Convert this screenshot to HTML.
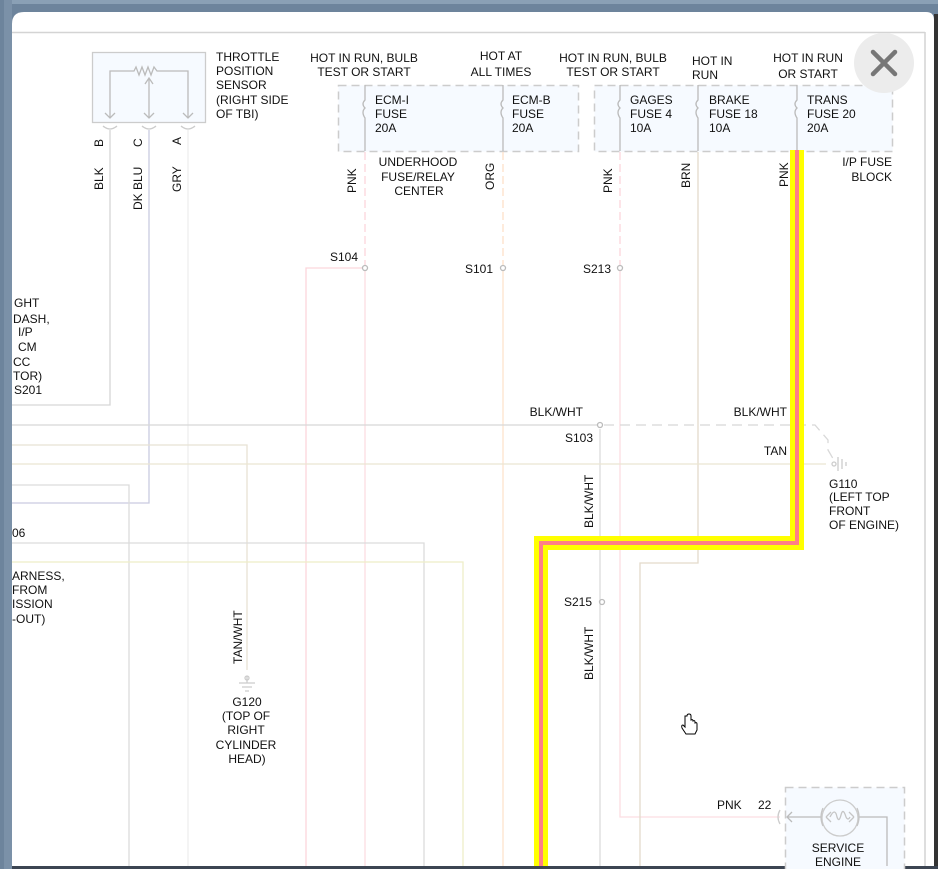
<!DOCTYPE html>
<html><head><meta charset="utf-8"><style>
html,body{margin:0;padding:0;width:938px;height:869px;overflow:hidden;background:#6d849c}
svg{display:block}
text{font-family:"Liberation Sans",Arial,sans-serif;font-size:12px;fill:#111}
</style></head><body>
<svg width="938" height="869" viewBox="0 0 938 869">
<rect x="0" y="0" width="938" height="869" fill="#6d849c"/>
<rect x="0" y="0" width="938" height="4" fill="#8aa0b5"/>
<path d="M12 869 V24 Q12 12 24 12 H926 Q934 12 934 20 V869 Z" fill="#fff"/>
<rect x="934" y="14" width="4" height="855" fill="#333"/>
<rect x="0" y="866" width="938" height="3" fill="#3c4552"/>
<line x1="12" y1="32.5" x2="925" y2="32.5" stroke="#d4d4d4" stroke-width="1.5"/>
<line x1="925" y1="32" x2="925" y2="866" stroke="#d4d4d4" stroke-width="1.5"/>
<g fill="none" stroke-width="1.3">
<!-- TPS -->
<rect x="92.5" y="52.5" width="113" height="70" fill="#f6faff" stroke="#ccc"/>
<path d="M110 118 V71 H134 l2-4 3 8 3-8 3 8 3-8 3 8 3-8 3 4 H188 V118" stroke="#bbb"/>
<path d="M149 79 V118 M145 84 l4-6 4 6" stroke="#bbb"/>
<path d="M105 113 l5 5 5-5 M144 113 l5 5 5-5 M183 113 l5 5 5-5" stroke="#bbb"/>
<path d="M103 126 q7 6 14 0 M142 126 q7 6 14 0 M181 126 q7 6 14 0" stroke="#ccc"/>
<path d="M12 405 H110 V130" stroke="#d6d6d6"/>
<path d="M12 503 H149 V130" stroke="#c9cbe0"/>
<path d="M188 130 V866" stroke="#eee"/>
<!-- fuse boxes -->
<rect x="338.5" y="85.5" width="240" height="66" fill="#f6faff" stroke="#ccc" stroke-dasharray="8,5" stroke-width="1.5"/>
<rect x="594.5" y="85.5" width="298" height="66" fill="#f6faff" stroke="#ccc" stroke-dasharray="8,5" stroke-width="1.5"/>
<g stroke="#bbb">
<path d="M365 85 V100 q-4 4 0 8 q-4 4 0 10 V151"/>
<path d="M503 85 V100 q-4 4 0 8 q-4 4 0 10 V151"/>
<path d="M620 85 V100 q-4 4 0 8 q-4 4 0 10 V151"/>
<path d="M698 85 V100 q-4 4 0 8 q-4 4 0 10 V151"/>
<path d="M797 85 V100 q-4 4 0 8 q-4 4 0 10 V151"/>
</g>
<!-- wires -->
<path d="M365 152 V266" stroke="#fcd6dc" stroke-dasharray="8,4"/>
<path d="M365 271 V866" stroke="#fcdde2"/>
<path d="M362 268 H306 V866" stroke="#fcd6dc"/>
<path d="M503 152 V266" stroke="#fde0c8" stroke-dasharray="8,4"/>
<path d="M503 271 V866" stroke="#fde3cc"/>
<path d="M620 152 V266" stroke="#fcd6dc" stroke-dasharray="8,4"/>
<path d="M620 271 V817 H780" stroke="#fcdde2"/>
<path d="M698 152 V563 H640 V866" stroke="#e3dacb"/>
<path d="M12 425 H597" stroke="#d8d8d8"/>
<path d="M604 425 H815 L828 440 V450 L835 462" stroke="#d8d8d8" stroke-dasharray="10,6"/>
<path d="M600 429 V866" stroke="#dcdcdc"/>
<path d="M12 445 H247 V670" stroke="#e8e2d4"/>
<path d="M12 464 H826" stroke="#ebe5d2"/>
<path d="M12 485 H129 V866" stroke="#dcdcdc"/>
<path d="M12 543 H424 V866" stroke="#dcdcdc"/>
<path d="M12 562 H463 V866" stroke="#eeeec8"/>
<circle cx="365" cy="268" r="2.5" stroke="#bbb"/>
<circle cx="503" cy="268" r="2.5" stroke="#bbb"/>
<circle cx="620" cy="268" r="2.5" stroke="#bbb"/>
<circle cx="600" cy="425" r="2.5" stroke="#bbb"/>
<circle cx="602" cy="602" r="2.5" stroke="#bbb"/>
<!-- grounds -->
<path d="M239 683 H255 M242 687 H252 M245 691 H249 M247 676 V683" stroke="#ccc"/>
<circle cx="247" cy="678" r="2" stroke="#ccc"/>
<path d="M838 457 V471 M842 459 V469 M846 462 V466" stroke="#ccc"/>
<circle cx="834" cy="464" r="2" stroke="#ccc"/>
<!-- service engine -->
<rect x="785.5" y="787.5" width="119" height="85" fill="#f6faff" stroke="#ccc" stroke-dasharray="8,5" stroke-width="1.5"/>
<path d="M780 810 q-4 7 0 14" stroke="#ccc"/>
<path d="M787 817 H822 M858 817 H887 V866 M792 812 l-5 5 5 5" stroke="#bbb"/>
<circle cx="840" cy="818" r="18" stroke="#ccc"/>
<path d="M823 808 q-4 9 0 18 M857 808 q4 9 0 18 M826 817 l5-5 M826 817 l5 5 M854 817 l-5-5 M854 817 l-5 5 M830 817 q5-10 7 0 q2 6 4-2 q2-8 5 2 q2 4 4 0" stroke="#c5c5c5"/>
<!-- highlight -->
<path d="M797 150 V543 H541 V866" stroke="#ffff00" stroke-width="14" stroke-linejoin="miter"/>
<path d="M797 150 V543 H541 V866" stroke="#ff7f87" stroke-width="4"/>
</g>
<!-- close button -->
<circle cx="884" cy="63" r="30" fill="#ececec"/>
<path d="M873 52 L895 74 M895 52 L873 74" stroke="#777" stroke-width="4.5" stroke-linecap="round"/>
<!-- texts -->
<text x="216" y="61">THROTTLE</text>
<text x="216" y="75">POSITION</text>
<text x="216" y="89">SENSOR</text>
<text x="216" y="104">(RIGHT SIDE</text>
<text x="216" y="118">OF TBI)</text>
<text x="364" y="62" text-anchor="middle">HOT IN RUN, BULB</text>
<text x="364" y="76" text-anchor="middle">TEST OR START</text>
<text x="501" y="60" text-anchor="middle">HOT AT</text>
<text x="501" y="76" text-anchor="middle">ALL TIMES</text>
<text x="613" y="62" text-anchor="middle">HOT IN RUN, BULB</text>
<text x="613" y="76" text-anchor="middle">TEST OR START</text>
<text x="692" y="65">HOT IN</text>
<text x="692" y="79">RUN</text>
<text x="808" y="62" text-anchor="middle">HOT IN RUN</text>
<text x="808" y="78" text-anchor="middle">OR START</text>
<text x="375" y="104">ECM-I</text><text x="375" y="118">FUSE</text><text x="375" y="132">20A</text>
<text x="512" y="104">ECM-B</text><text x="512" y="118">FUSE</text><text x="512" y="132">20A</text>
<text x="630" y="104">GAGES</text><text x="630" y="118">FUSE 4</text><text x="630" y="132">10A</text>
<text x="709" y="104">BRAKE</text><text x="709" y="118">FUSE 18</text><text x="709" y="132">10A</text>
<text x="807" y="104">TRANS</text><text x="807" y="118">FUSE 20</text><text x="807" y="132">20A</text>
<text x="418" y="166" text-anchor="middle">UNDERHOOD</text>
<text x="418" y="181" text-anchor="middle">FUSE/RELAY</text>
<text x="419" y="195" text-anchor="middle">CENTER</text>
<text x="892" y="166" text-anchor="end">I/P FUSE</text>
<text x="892" y="181" text-anchor="end">BLOCK</text>
<g>
<text transform="translate(103,147) rotate(-90)">B</text>
<text transform="translate(142,147) rotate(-90)">C</text>
<text transform="translate(181,145) rotate(-90)">A</text>
<text transform="translate(103,190) rotate(-90)">BLK</text>
<text transform="translate(142,210) rotate(-90)">DK BLU</text>
<text transform="translate(181,192) rotate(-90)">GRY</text>
<text transform="translate(356,193) rotate(-90)">PNK</text>
<text transform="translate(494,190) rotate(-90)">ORG</text>
<text transform="translate(612,193) rotate(-90)">PNK</text>
<text transform="translate(690,188) rotate(-90)">BRN</text>
<text transform="translate(788,187) rotate(-90)">PNK</text>
<text transform="translate(593,528) rotate(-90)">BLK/WHT</text>
<text transform="translate(593,680) rotate(-90)">BLK/WHT</text>
<text transform="translate(242,664) rotate(-90)">TAN/WHT</text>
</g>
<text x="358" y="261" text-anchor="end">S104</text>
<text x="493" y="273" text-anchor="end">S101</text>
<text x="611" y="273" text-anchor="end">S213</text>
<text x="583" y="416" text-anchor="end">BLK/WHT</text>
<text x="787" y="416" text-anchor="end">BLK/WHT</text>
<text x="593" y="442" text-anchor="end">S103</text>
<text x="787" y="455" text-anchor="end">TAN</text>
<text x="592" y="606" text-anchor="end">S215</text>
<text x="829" y="488">G110</text>
<text x="829" y="501">(LEFT TOP</text>
<text x="829" y="515">FRONT</text>
<text x="829" y="529">OF ENGINE)</text>
<text x="247" y="706" text-anchor="middle">G120</text>
<text x="246" y="720" text-anchor="middle">(TOP OF</text>
<text x="246" y="734" text-anchor="middle">RIGHT</text>
<text x="246" y="749" text-anchor="middle">CYLINDER</text>
<text x="247" y="763" text-anchor="middle">HEAD)</text>
<text x="717" y="809">PNK</text>
<text x="758" y="809">22</text>
<text x="838" y="852" text-anchor="middle">SERVICE</text>
<text x="838" y="866" text-anchor="middle">ENGINE</text>
<text x="14" y="307">GHT</text>
<text x="13" y="323">DASH,</text>
<text x="18" y="336">I/P</text>
<text x="18" y="351">CM</text>
<text x="13" y="366">CC</text>
<text x="13" y="380">TOR)</text>
<text x="14" y="394">S201</text>
<text x="12" y="537">06</text>
<text x="12" y="580">ARNESS,</text>
<text x="12" y="594">FROM</text>
<text x="12" y="608">ISSION</text>
<text x="12" y="623">-OUT)</text>
<rect x="0" y="0" width="12" height="869" fill="#6d849c"/>
<rect x="4" y="0" width="8" height="869" fill="#7b91a8"/>
<!-- cursor -->
<path d="M685 716 V727 l-2-2 q-2 0 -1 3 l4 6 H695 l2-4 V724 q0-2 -2-1 V722 q0-2 -2-1 V721 q0-2 -2-1 V716 q0-2 -2-2 q-2 0 -2 2Z" fill="#fff" stroke="#000" stroke-width="1"/>
</svg>
</body></html>
